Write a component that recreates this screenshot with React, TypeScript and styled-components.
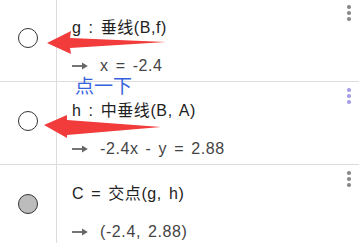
import React from "react";
import styled, { createGlobalStyle } from "styled-components";

const Global = createGlobalStyle`
  html, body { margin: 0; padding: 0; background: #fff; }
  body { width: 359px; height: 243px; overflow: hidden; font-family: "Liberation Sans", "Noto Sans CJK SC", sans-serif; }
`;

const Page = styled.div`
  position: relative;
  width: 359px;
  height: 243px;
  overflow: hidden;
`;

const List = styled.div`
  margin-top: -1px;
  display: flex;
  flex-direction: column;
`;

const Row = styled.div`
  display: grid;
  grid-template-columns: 57px 1fr 20px;
  height: 83px;
  box-sizing: border-box;
  border-bottom: 1px solid #dcdcdc;
`;

const Marble = styled.div`
  border-right: 1px solid #dcdcdc;
  display: flex;
  justify-content: center;
  padding-top: 29px;
  padding-right: 1px;
`;

const Dot = styled.div<{ $filled?: boolean }>`
  width: 18px;
  height: 18px;
  border-radius: 50%;
  border: 1px solid #333;
  background: ${(p) => (p.$filled ? "#bcbcbc" : "#fff")};
  box-sizing: content-box;
`;

const Body = styled.div`
  display: flex;
  flex-direction: column;
  padding-left: 15px;
  padding-top: 19px;
  gap: 18px;
`;

const Def = styled.div`
  font-size: 16px;
  line-height: 20px;
  letter-spacing: 0.6px;
  word-spacing: 2px;
  color: #222;
  white-space: nowrap;
`;

const Out = styled.div`
  display: flex;
  align-items: center;
  gap: 12px;
  font-size: 16px;
  line-height: 20px;
  letter-spacing: 0.6px;
  word-spacing: 2px;
  color: #444;
  white-space: nowrap;
`;

const Menu = styled.div<{ $color: string }>`
  display: flex;
  flex-direction: column;
  align-items: center;
  gap: 2.6px;
  padding-top: 6px;
  span {
    width: 3.6px;
    height: 3.6px;
    border-radius: 50%;
    background: ${(p) => p.$color};
  }
`;

const Hint = styled.div`
  position: absolute;
  left: 75px;
  top: 75px;
  font-family: "Noto Sans CJK SC", sans-serif;
  font-size: 19px;
  line-height: 19px;
  color: #3562dc;
`;

const Overlay = styled.svg`
  position: absolute;
  left: 0;
  top: 0;
  pointer-events: none;
`;

const Arrow = () => (
  <svg width="16" height="8" viewBox="0 0 16 8">
    <path d="M0 4 H13" stroke="#666" strokeWidth="1.8" />
    <path d="M10 0.6 L15.8 4 L10 7.4 Z" fill="#666" />
  </svg>
);

const Dots = ({ color }: { color: string }) => (
  <Menu $color={color}>
    <span />
    <span />
    <span />
  </Menu>
);

export default function App() {
  return (
    <Page>
      <Global />
      <List>
        <Row>
          <Marble><Dot /></Marble>
          <Body>
            <Def>g : 垂线(B,f)</Def>
            <Out><Arrow />x = -2.4</Out>
          </Body>
          <Dots color="#8a8a8a" />
        </Row>
        <Row>
          <Marble><Dot /></Marble>
          <Body>
            <Def>h : 中垂线(B, A)</Def>
            <Out><Arrow />-2.4x - y = 2.88</Out>
          </Body>
          <Dots color="#a79ee8" />
        </Row>
        <Row>
          <Marble><Dot $filled /></Marble>
          <Body>
            <Def>C = 交点(g, h)</Def>
            <Out><Arrow />(-2.4, 2.88)</Out>
          </Body>
          <Dots color="#8a8a8a" />
        </Row>
      </List>
      <Hint>点一下</Hint>
      <Overlay width="359" height="243" viewBox="0 0 359 243">
        <polygon points="47,43 71,31 70,38 166,42 70,48 71,54" fill="#f23b3b" />
        <polygon points="44,125 67,115 67,120 161,127 67,135 67,138" fill="#f23b3b" />
      </Overlay>
    </Page>
  );
}
